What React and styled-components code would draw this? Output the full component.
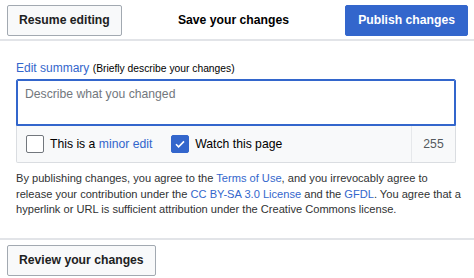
import styled, { createGlobalStyle } from "styled-components";

const Global = createGlobalStyle`
  body{margin:0;background:#fff;font-family:"Liberation Sans",Arial,sans-serif;color:#202122;}
`;

export default function App() {
  return (
    <>
      <Global />
      <Dialog>
        <Head>
          <Button>Resume editing</Button>
          <Title>Save your changes</Title>
          <Button primary>Publish changes</Button>
        </Head>

        <Body>
          <Label>
            <LabelLink>Edit summary</LabelLink> <small>(Briefly describe your changes)</small>
          </Label>
          <Summary placeholder="Describe what you changed" />
          <OptionBar>
            <Options>
              <Option>
                <Check />
                <span>This is a <Link>minor edit</Link></span>
              </Option>
              <Option>
                <Check checked>
                  <svg width="12" height="12" viewBox="0 0 12 12">
                    <path d="M2 6.2l2.6 2.6L10 3.4" fill="none" stroke="#fff" strokeWidth="1.6" />
                  </svg>
                </Check>
                <span>Watch this page</span>
              </Option>
            </Options>
            <Count>255</Count>
          </OptionBar>
          <Legal>
            By publishing changes, you agree to the <Link>Terms of Use</Link>, and you irrevocably agree to<br />
            release your contribution under the <Link>CC BY-SA 3.0 License</Link> and the <Link>GFDL</Link>. You agree that a<br />
            hyperlink or URL is sufficient attribution under the Creative Commons license.
          </Legal>
        </Body>

        <Foot>
          <Button>Review your changes</Button>
        </Foot>
      </Dialog>
    </>
  );
}

const Dialog = styled.div`width:474px;height:278px;overflow:hidden;`;
const Head = styled.div`
  display:flex;align-items:center;justify-content:space-between;
  height:41px;padding:0 6px 0 7px;box-sizing:border-box;
  border-bottom:2px solid #e2e4e8;
`;
const Title = styled.div`font-size:12.2px;font-weight:700;color:#000;`;
const Button = styled.button`
  height:31px;padding:0 ${(p) => (p.primary ? "12px" : "11px")};
  margin-top:1px;
  font-family:inherit;font-size:12.2px;font-weight:700;
  color:${(p) => (p.primary ? "#fff" : "#202122")};
  background:${(p) => (p.primary ? "#3366cc" : "#f8f9fa")};
  border:1px solid ${(p) => (p.primary ? "#3366cc" : "#a2a9b1")};
  border-radius:2px;
`;
const Body = styled.div`padding:19px 18px 0 16px;`;
const Label = styled.div`
  font-size:12px;line-height:16px;margin-bottom:2px;
  small{font-size:10.3px;color:#000;}
`;
const LabelLink = styled.span`color:#3366cc;`;
const Link = styled.span`color:#3366cc;`;
const Summary = styled.textarea`
  display:block;width:100%;height:47px;box-sizing:border-box;resize:none;
  margin:0;padding:7px 8px;
  font-family:inherit;font-size:12.2px;color:#202122;
  border:1px solid #3366cc;box-shadow:inset 0 0 0 1px #3366cc;border-radius:2px 2px 0 0;outline:none;
  &::placeholder{color:#72777d;}
`;
const OptionBar = styled.div`
  display:flex;height:37px;box-sizing:border-box;
  background:#f8f9fa;border:1px solid #dadde1;border-top:0;border-radius:0 0 2px 2px;
`;
const Options = styled.div`flex:1;display:flex;align-items:center;gap:19px;padding-left:9px;`;
const Option = styled.label`display:flex;align-items:center;gap:6px;font-size:12.2px;color:#000;`;
const Check = styled.span`
  display:flex;align-items:center;justify-content:center;
  width:18px;height:18px;box-sizing:border-box;border-radius:2px;
  border:1px solid ${(p) => (p.checked ? "#3366cc" : "#72777d")};
  background:${(p) => (p.checked ? "#3366cc" : "#fff")};
`;
const Count = styled.div`
  width:43px;display:flex;align-items:center;justify-content:center;
  border-left:1px solid #e6e8eb;font-size:12.2px;color:#54595d;
`;
const Legal = styled.p`
  margin:8px -6px 0 0;font-size:11.1px;line-height:15.5px;color:#303233;white-space:nowrap;
`;
const Foot = styled.div`
  margin-top:20px;border-top:2px solid #e2e4e8;padding:4px 7px;
`;
